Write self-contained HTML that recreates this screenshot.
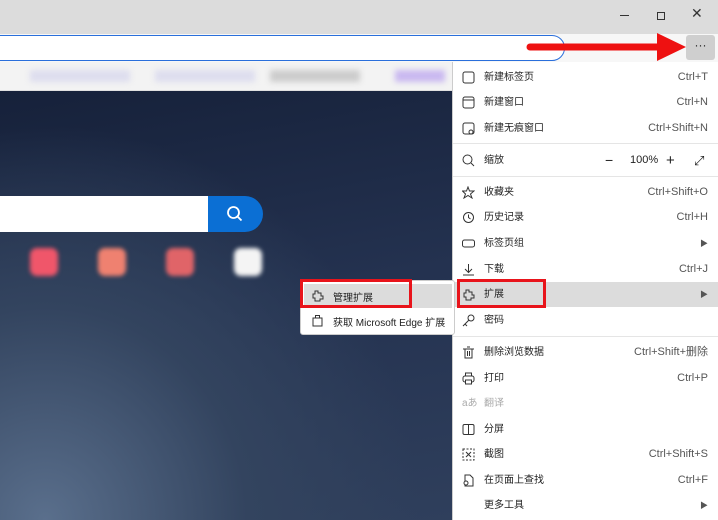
<!DOCTYPE html>
<html><head><meta charset="utf-8"><style>
*{margin:0;padding:0;box-sizing:border-box}
body{width:718px;height:520px;overflow:hidden;position:relative;font-family:"Liberation Sans","Noto Sans CJK SC",sans-serif;font-size:10px;color:#222;background:#fff}
.top{position:absolute;left:0;top:0;width:718px;height:34px;background:#dcdcdc}
.bar{position:absolute;left:0;top:34px;width:718px;height:28px;background:#f7f7f7}
.addr{position:absolute;left:-10px;top:35px;width:575px;height:26px;background:#fff;border:1.5px solid #2a6fdb;border-radius:0 13px 13px 0}
.bm{position:absolute;left:0;top:62px;width:718px;height:29px;background:#f3f3f3;border-bottom:1px solid #e0e0e0}
.bg{position:absolute;left:0;top:91px;width:452px;height:429px;background:radial-gradient(ellipse at 10% 100%,#5a6f8c 0%,#33445f 35%,transparent 65%),linear-gradient(170deg,#16213a 0%,#243250 50%,#2f3f5c 100%)}
.menu{position:absolute;left:452px;top:62px;width:266px;height:458px;background:#fff;border-left:1px solid #ccc}
.it{position:absolute;left:0;width:266px;height:25px;line-height:25px}
.it .t{position:absolute;left:31px}
.it .k{position:absolute;right:11px;color:#555;font-size:11px}
.it svg{position:absolute;left:9px;top:6px}
.sep{position:absolute;left:0;width:266px;height:1px;background:#e5e5e5}
.sub{position:absolute;left:300px;top:280px;width:155px;height:55px;background:#fff;border:1px solid #ccc;border-radius:3px}
.red{position:absolute;border:3px solid #e8141b}
.ico{position:absolute;width:28px;height:28px;border-radius:7px;filter:blur(2px)}
</style></head><body>
<div class="top"></div>
<div style="position:absolute;left:620px;top:15px;width:9px;height:1px;background:#333"></div>
<div style="position:absolute;left:657px;top:12px;width:8px;height:8px;border:1px solid #333"></div>
<div style="position:absolute;left:691px;top:5px;font-size:14px;color:#333">✕</div>
<div class="bar"></div>
<div class="addr"></div>
<div style="position:absolute;left:686px;top:35px;width:29px;height:25px;background:#cfcfcf;border-radius:3px;text-align:center;line-height:20px;font-size:12px">···</div>
<svg style="position:absolute;left:520px;top:30px" width="170" height="36"><line x1="10" y1="17" x2="145" y2="17" stroke="#ee1111" stroke-width="7" stroke-linecap="round"/><polygon points="137,3 166,17 137,31" fill="#ee1111"/></svg>
<div class="bm"></div>
<div style="position:absolute;left:30px;top:70px;width:100px;height:12px;background:#dde;filter:blur(3px)"></div>
<div style="position:absolute;left:155px;top:70px;width:100px;height:12px;background:#dde;filter:blur(3px)"></div>
<div style="position:absolute;left:270px;top:70px;width:90px;height:12px;background:#ccc;filter:blur(3px)"></div>
<div style="position:absolute;left:395px;top:70px;width:50px;height:12px;background:#c9b8f0;filter:blur(3px)"></div>
<div class="bg"></div>
<div style="position:absolute;left:0;top:196px;width:208px;height:36px;background:#fff"></div>
<div style="position:absolute;left:208px;top:196px;width:55px;height:36px;background:#0b6fd4;border-radius:0 18px 18px 0"></div>
<svg style="position:absolute;left:226px;top:205px" width="18" height="18"><circle cx="7.5" cy="7.5" r="5.5" fill="none" stroke="#fff" stroke-width="1.8"/><line x1="11.5" y1="11.5" x2="15.5" y2="15.5" stroke="#fff" stroke-width="1.8"/></svg>
<div class="ico" style="left:30px;top:248px;background:#f0566a"></div>
<div class="ico" style="left:98px;top:248px;background:#ef8170"></div>
<div class="ico" style="left:166px;top:248px;background:#e06468"></div>
<div class="ico" style="left:234px;top:248px;background:#f4f4f4"></div>
<div class="menu">
<div class="it" style="top:3px"><svg width="13" height="13"><rect x="1" y="1" width="11" height="11" rx="2" fill="none" stroke="#333"/></svg><span class="t">新建标签页</span><span class="k">Ctrl+T</span></div>
<div class="it" style="top:28px"><svg width="13" height="13"><rect x="1" y="1" width="11" height="11" rx="2" fill="none" stroke="#333"/><line x1="1" y1="4" x2="12" y2="4" stroke="#333"/></svg><span class="t">新建窗口</span><span class="k">Ctrl+N</span></div>
<div class="it" style="top:54px"><svg width="13" height="13"><rect x="1" y="1" width="11" height="11" rx="2" fill="none" stroke="#333"/><circle cx="9" cy="10" r="2" fill="#fff" stroke="#333"/></svg><span class="t">新建无痕窗口</span><span class="k">Ctrl+Shift+N</span></div>
<div class="sep" style="top:81px"></div>
<div class="it" style="top:86px"><svg width="13" height="13"><circle cx="5.5" cy="5.5" r="4.5" fill="none" stroke="#333"/><line x1="9" y1="9" x2="12" y2="12" stroke="#333"/></svg><span class="t">缩放</span><span style="position:absolute;left:152px;font-size:14px">−</span><span style="position:absolute;left:177px;font-size:11px">100%</span><span style="position:absolute;left:213px;font-size:15px">+</span><span style="position:absolute;left:241px;font-size:13px">⤢</span></div>
<div class="sep" style="top:114px"></div>
<div class="it" style="top:118px"><svg width="13" height="13"><polygon points="6,1 7.5,5 12,5 8.5,8 10,12 6,9.5 2,12 3.5,8 0.5,5 4.5,5" fill="none" stroke="#333"/></svg><span class="t">收藏夹</span><span class="k">Ctrl+Shift+O</span></div>
<div class="it" style="top:143px"><svg width="13" height="13"><circle cx="6.5" cy="6.5" r="5" fill="none" stroke="#333"/><path d="M6.5 3.5V6.5L8.5 8" fill="none" stroke="#333"/></svg><span class="t">历史记录</span><span class="k">Ctrl+H</span></div>
<div class="it" style="top:169px"><svg width="13" height="13"><rect x="0.5" y="3" width="12" height="7" rx="2" fill="none" stroke="#333"/></svg><span class="t">标签页组</span><span class="k" style="font-size:8px">▶</span></div>
<div class="it" style="top:195px"><svg width="13" height="13"><path d="M6.5 1V9M3 6l3.5 3.5L10 6M1 12H12" fill="none" stroke="#333"/></svg><span class="t">下载</span><span class="k">Ctrl+J</span></div>
<div class="it" style="top:220px;background:#dcdcdc"><svg width="13" height="13"><path d="M4 2h3v2h3v3h2v3h-3v2H4v-3H2V5h2z" fill="none" stroke="#333"/></svg><span class="t">扩展</span><span class="k" style="font-size:8px">▶</span></div>
<div class="it" style="top:246px"><svg width="13" height="13"><circle cx="9" cy="4" r="3" fill="none" stroke="#333"/><path d="M7 6L1 12M3 10l2 2" fill="none" stroke="#333"/></svg><span class="t">密码</span></div>
<div class="sep" style="top:274px"></div>
<div class="it" style="top:278px"><svg width="13" height="13"><path d="M1 3H12M3 3V12H10V3M5 1H8M5.5 5V10M7.5 5V10" fill="none" stroke="#333"/></svg><span class="t">删除浏览数据</span><span class="k">Ctrl+Shift+删除</span></div>
<div class="it" style="top:304px"><svg width="13" height="13"><rect x="1" y="4" width="11" height="6" rx="2" fill="none" stroke="#333"/><rect x="3.5" y="1" width="6" height="3" fill="none" stroke="#333"/><rect x="3.5" y="8" width="6" height="4" fill="#fff" stroke="#333"/></svg><span class="t">打印</span><span class="k">Ctrl+P</span></div>
<div class="it" style="top:329px;color:#aaa"><span style="position:absolute;left:9px;color:#aaa">aあ</span><span class="t">翻译</span></div>
<div class="it" style="top:355px"><svg width="13" height="13"><rect x="1" y="1.5" width="11" height="10" rx="1.5" fill="none" stroke="#333"/><line x1="6.5" y1="1.5" x2="6.5" y2="11.5" stroke="#333"/></svg><span class="t">分屏</span></div>
<div class="it" style="top:380px"><svg width="13" height="13"><rect x="1" y="1" width="11" height="11" fill="none" stroke="#333" stroke-dasharray="2 1.5"/><path d="M4 4l5 5M9 4L4 9" stroke="#333"/></svg><span class="t">截图</span><span class="k">Ctrl+Shift+S</span></div>
<div class="it" style="top:406px"><svg width="13" height="13"><path d="M3 1h5l3 3v8H3z" fill="none" stroke="#333"/><circle cx="4" cy="9" r="2" fill="#fff" stroke="#333"/></svg><span class="t">在页面上查找</span><span class="k">Ctrl+F</span></div>
<div class="it" style="top:431px"><span class="t">更多工具</span><span class="k" style="font-size:8px">▶</span></div>
</div>
<div class="red" style="left:457px;top:279px;width:89px;height:29px"></div>
<div class="sub">
<div style="position:absolute;left:3px;top:3px;width:148px;height:24px;background:#dcdcdc"></div>
<svg style="position:absolute;left:10px;top:8px" width="13" height="13"><path d="M4 2h3v2h3v3h2v3h-3v2H4v-3H2V5h2z" fill="none" stroke="#333"/></svg>
<span style="position:absolute;left:32px;top:8px">管理扩展</span>
<svg style="position:absolute;left:10px;top:33px" width="13" height="13"><rect x="2" y="4" width="9" height="8" fill="none" stroke="#333"/><path d="M4.5 4V1.5h4V4" fill="none" stroke="#333"/></svg>
<span style="position:absolute;left:32px;top:33px">获取 Microsoft Edge 扩展</span>
</div>
<div class="red" style="left:300px;top:279px;width:112px;height:29px"></div>
</body></html>
